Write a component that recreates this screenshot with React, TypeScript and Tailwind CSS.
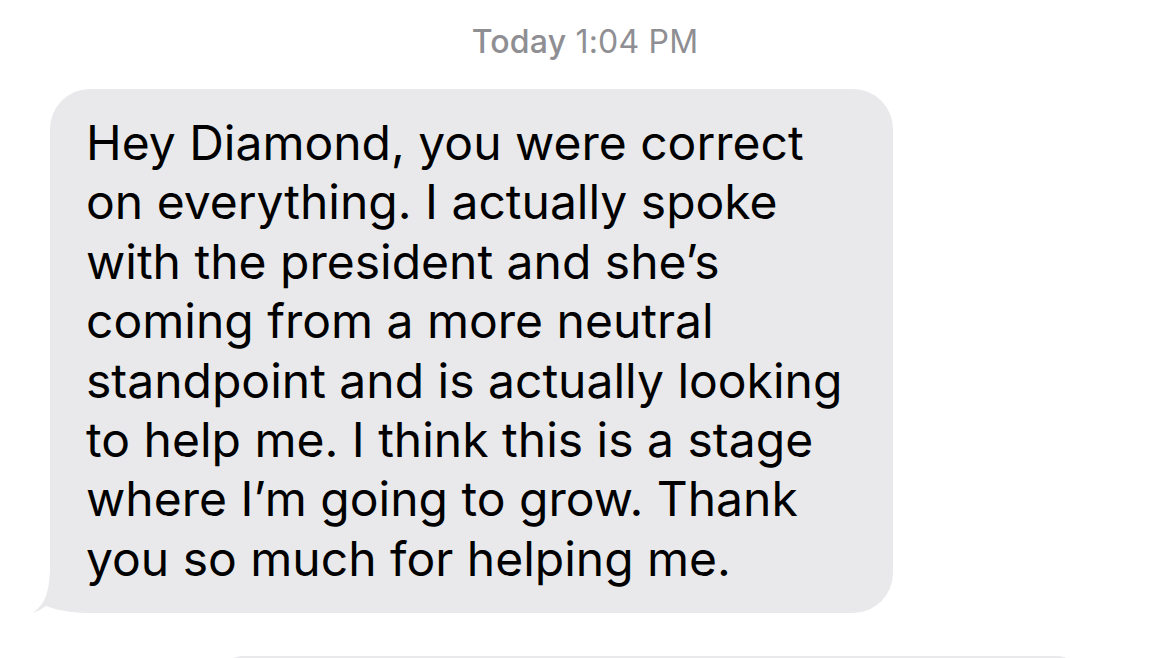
import React from "react";

const lines = [
  "Hey Diamond, you were correct",
  "on everything. I actually spoke",
  "with the president and she\u2019s",
  "coming from a more neutral",
  "standpoint and is actually looking",
  "to help me. I think this is a stage",
  "where I\u2019m going to grow. Thank",
  "you so much for helping me.",
];

export default function App() {
  return (
    <div className="w-[1170px] h-[658px] bg-white overflow-hidden relative" style={{ fontFamily: "Inter, 'Noto Sans', sans-serif" }}>
      <div className="pt-[24px] h-[89px] text-center text-[32px] text-[#8e8e93] leading-[36px] tracking-[0.2px]">
        <span className="font-medium">Today</span> <span>1:04 PM</span>
      </div>
      <div className="ml-[50px] relative w-[843px]">
        <svg className="absolute left-[-18px] bottom-[-1px]" width="70" height="50" viewBox="0 0 70 50">
          <path d="M18 0 L38 0 L38 30 C42 40 55 47 70 49 L60 49 C45 49 30 48 14 42 C8 46 4 48 0 49 C12 42 18 30 18 0 Z" fill="#e9e9eb" />
        </svg>
        <div className="relative bg-[#e9e9eb] rounded-[40px] pl-[36px] pr-[20px] pt-[24px] h-[524px] text-black text-[48px] leading-[59.4px]">
          {lines.map((l, i) => (
            <div key={i} className="whitespace-nowrap">{l}</div>
          ))}
        </div>
      </div>
      <div className="absolute left-[222px] top-[656px] w-[856px] h-[40px] bg-[#e9e9eb] rounded-[30px]" />
    </div>
  );
}
